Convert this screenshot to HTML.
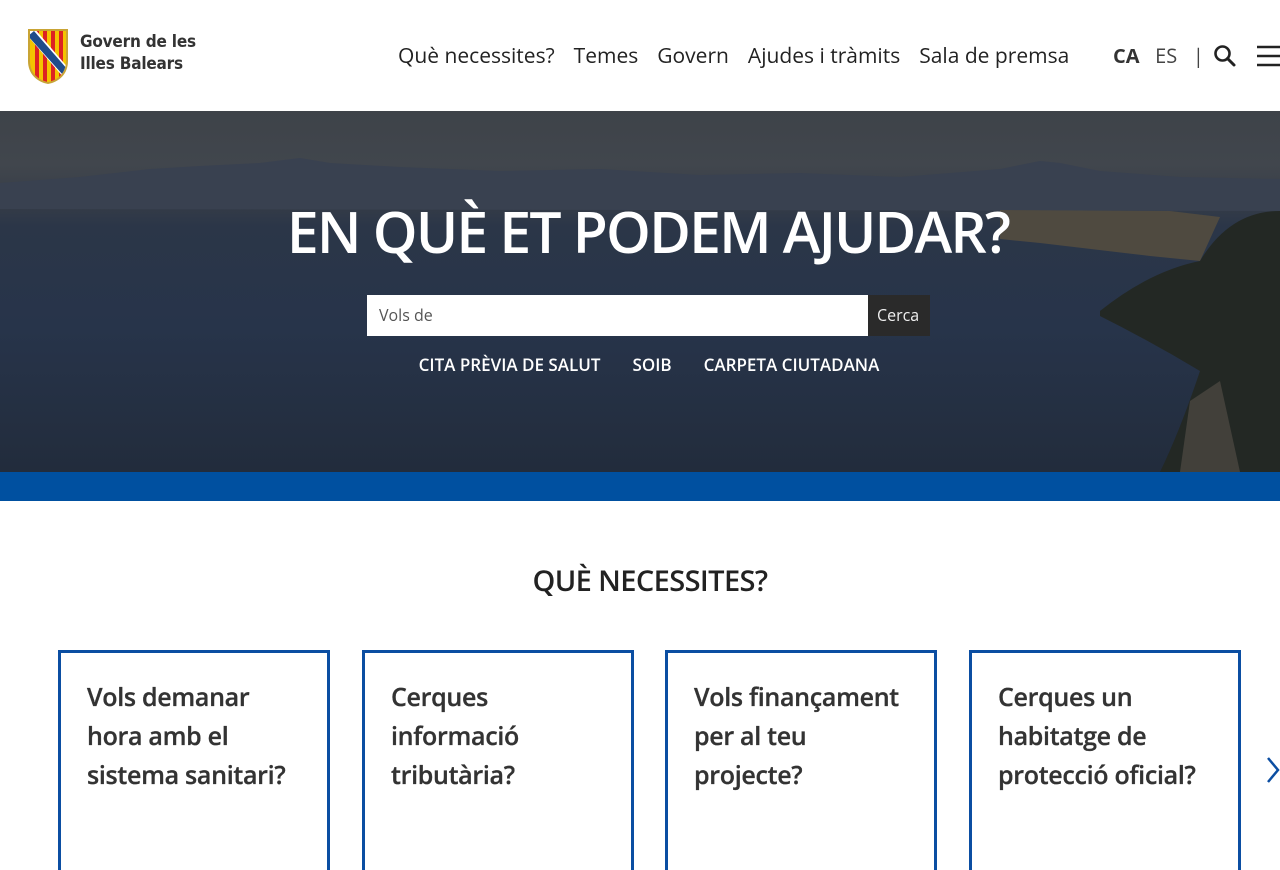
<!DOCTYPE html>
<html><head><meta charset="utf-8">
<style>
*{margin:0;padding:0;box-sizing:border-box}
body{width:1280px;height:853px;overflow:hidden;background:#fff;font-family:"Open Sans","DejaVu Sans","Liberation Sans",sans-serif;color:#222;position:relative}
.hdr{height:111px;position:relative}
.logo{position:absolute;left:26px;top:28px}
.lt{position:absolute;left:80px;top:31px;font:bold 17px/22px "DejaVu Sans Condensed","DejaVu Sans",sans-serif;color:#333;letter-spacing:-0.2px}
.nav{position:absolute;top:42px;left:398px;font-size:21px;color:#222;white-space:nowrap}
.nav span{margin-right:19px}
.lang{position:absolute;top:42px;left:1113px;font-size:20px;white-space:nowrap}
.hero{position:absolute;top:111px;left:0;width:1280px;height:361px;overflow:hidden;
background:linear-gradient(180deg,#3e4349 0%,#41464d 15%,#353c47 26%,#2b3648 32%,#27344a 60%,#222c3c 100%)}
.blue{position:absolute;top:472px;left:0;width:1280px;height:29px;background:#0050a0}
h1{position:absolute;top:192px;left:8px;width:1280px;text-align:center;color:#fff;font-size:57px;font-weight:600;letter-spacing:-1.8px}
.srch{position:absolute;top:295px;left:367px;width:501px;height:41px;background:#fff;font-size:16px;color:#555;padding:9px 12px}
.btn{position:absolute;top:295px;left:868px;width:62px;height:41px;background:#2a2a2a;color:#eee;font-size:16px;padding:9px 9px}
.ql{position:absolute;top:353px;left:0;width:1280px;text-align:center;color:#fff;font:600 17px "Open Sans",sans-serif;letter-spacing:0;padding-left:18px}
.ql span{margin:0 16px}
h2{position:absolute;top:561px;left:0;width:1300px;text-align:center;font:600 29px "Open Sans",sans-serif;letter-spacing:-0.6px;color:#222}
.card{position:absolute;top:650px;width:272px;height:220px;border:3px solid #0b4ea2;border-bottom:none;padding:25px 26px;font:600 25px/39px "Open Sans",sans-serif;letter-spacing:-0.3px;color:#333;-webkit-text-stroke:0.3px #333}
</style></head><body>
<div class="hdr">
<svg class="logo" width="44" height="57" viewBox="0 0 44 57">
<defs><clipPath id="c"><path d="M4 3h36v30c0 12-8 19-18 21C12 52 4 45 4 33z"/></clipPath></defs>
<path d="M2 1h40v32c0 13-9 21-20 23C11 54 2 46 2 33z" fill="#c9a435"/>
<g clip-path="url(#c)"><rect x="0" y="0" width="44" height="57" fill="#f4c400"/>
<rect x="9" y="0" width="4" height="57" fill="#d22"/><rect x="17" y="0" width="4" height="57" fill="#d22"/><rect x="25" y="0" width="4" height="57" fill="#d22"/><rect x="33" y="0" width="4" height="57" fill="#d22"/>
<path d="M0 6 L8 0 L44 42 L38 50z" fill="#fff"/><path d="M2 8 L8 3 L42 42 L37 47z" fill="#1f4c8a"/></g>
</svg>
<div class="lt">Govern de les<br>Illes Balears</div>
<div class="nav"><span>Què necessites?</span><span>Temes</span><span>Govern</span><span>Ajudes i tràmits</span><span>Sala de premsa</span></div>
<div class="lang"><b style="color:#333">CA</b>&nbsp;&nbsp;&nbsp;<span style="color:#444">ES</span>&nbsp;&nbsp;&nbsp;<span style="color:#444">|</span></div>
<svg style="position:absolute;left:1213px;top:44px" width="24" height="24" viewBox="0 0 24 24"><circle cx="9.5" cy="9.5" r="7" fill="none" stroke="#222" stroke-width="2.6"/><path d="M14.5 14.5L21 21" stroke="#222" stroke-width="3" stroke-linecap="round"/></svg>
<svg style="position:absolute;left:1256px;top:44px" width="24" height="24" viewBox="0 0 24 24"><path d="M1 3h23M1 12h23M1 21h23" stroke="#222" stroke-width="2.6"/></svg>
</div>
<div class="hero">
<svg width="1280" height="361" style="position:absolute;left:0;top:0">
<path d="M0 72 L80 66 L150 58 L200 55 L260 52 L300 47 L330 52 L400 56 L500 60 L600 58 L700 64 L800 62 L900 66 L1000 58 L1040 50 L1060 52 L1100 60 L1180 66 L1280 68 L1280 100 L0 98z" fill="#394150"/>
<path d="M1000 99 L1170 100 L1220 106 L1200 150 L1150 145 L1040 132 L1000 128z" fill="#4f4a40"/>
<path d="M1100 200 Q1150 160 1200 150 Q1230 100 1280 100 L1280 361 L1160 361 Q1180 320 1200 260 Q1150 230 1100 205z" fill="#232824"/>
<path d="M1190 290 L1220 270 L1240 361 L1180 361z" fill="#4a4640" opacity=".8"/>
</svg>
</div>
<div class="blue"></div>
<h1>EN QUÈ ET PODEM AJUDAR?</h1>
<div class="srch">Vols de</div>
<div class="btn">Cerca</div>
<div class="ql"><span>CITA PRÈVIA DE SALUT</span><span>SOIB</span><span>CARPETA CIUTADANA</span></div>
<h2>QUÈ NECESSITES?</h2>
<div class="card" style="left:58px">Vols demanar hora amb el sistema sanitari?</div>
<div class="card" style="left:362px">Cerques informació tributària?</div>
<div class="card" style="left:665px">Vols finançament per al teu projecte?</div>
<div class="card" style="left:969px">Cerques un habitatge de protecció oficial?</div>
<svg style="position:absolute;left:1266px;top:756px" width="14" height="28" viewBox="0 0 14 28"><path d="M2 2L12 14L2 26" fill="none" stroke="#0b4ea2" stroke-width="2.5"/></svg>
</body></html>
